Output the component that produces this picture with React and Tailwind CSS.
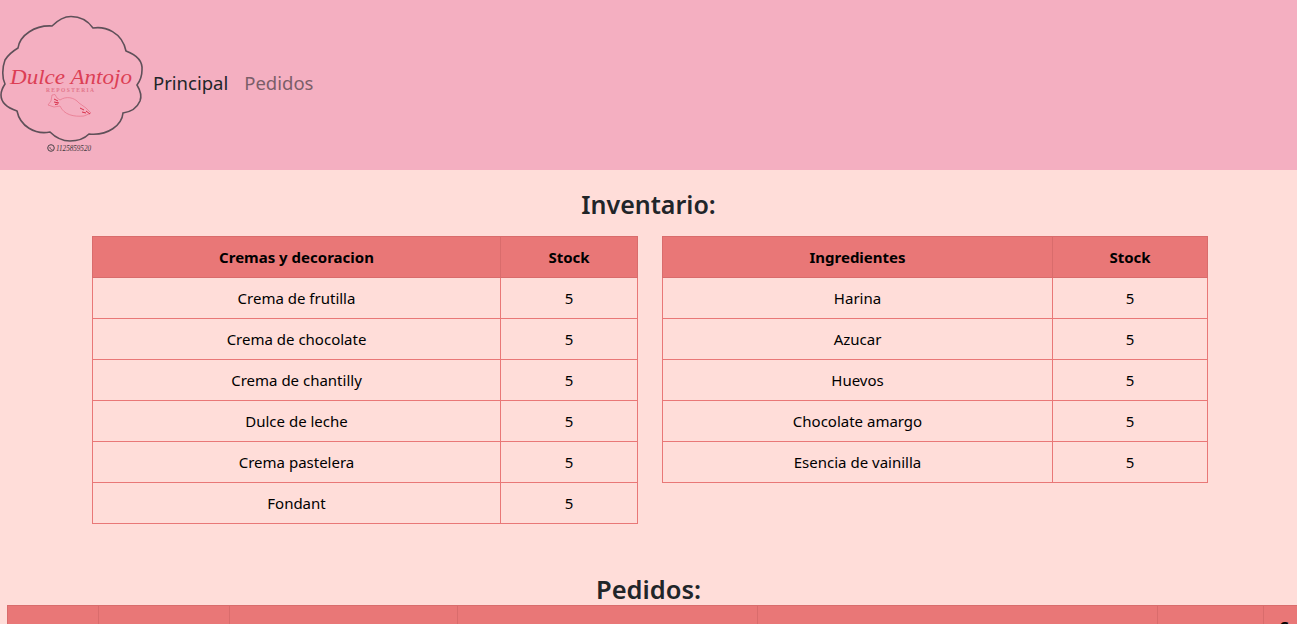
const FONT = "font-['Noto_Sans',sans-serif]";

function Logo() {
  return (
    <svg width="145" height="170" viewBox="0 0 145 170" className="shrink-0">
      <path
        d="M52 26 C58 20 64 16.5 71 16.5 C80 16.5 88 21 93 28 C105 26 122 32 126 51 C134 54 143 60 142 70 C142 76 140 81 137 85 C140 90 142 96 140 101 C137 108 130 112 123 113 C122 125 108 136 89 134 C84 139 77 141 70 141 C62 141 55 137 50 132 C35 135 20 126 17 111 C8 108 1 103 1 95 C1 91 3 87 5 84 C2 78 2 68 5 60 C8 55 13 51 18 48 C20 35 35 25 52 26 Z"
        fill="none"
        stroke="#5f5059"
        strokeWidth="1.6"
      />
      <text x="10" y="84" fontFamily="'Liberation Serif', serif" fontStyle="italic" fontSize="21" fill="#dc3f55" textLength="122" lengthAdjust="spacingAndGlyphs">
        Dulce Antojo
      </text>
      <text x="46" y="91.5" fontFamily="'Liberation Serif', serif" fontWeight="700" fontSize="5.5" fill="#e2758a" textLength="48" lengthAdjust="spacing">
        REPOSTERIA
      </text>
      <path
        d="M52 95 L55 94.5 L57 98 L60 100 C66 96 74 97 79 103 L86 108 L91 113 L84 116 C74 117 64 115 60 106 L54 107 L48 105 L51 101 Z"
        fill="none"
        stroke="#e9798f"
        strokeWidth="0.8"
      />
      <path d="M54 99 L58 101 M54 102 L59 103 M55 104.5 L58 104 M80 108 L84 110 M82 112 L86 113 M86 111 L90 114" stroke="#d8304a" strokeWidth="1" fill="none" />
      <circle cx="51" cy="148" r="3.3" fill="none" stroke="#4a4248" strokeWidth="1" />
      <path d="M49.8 147 C50 149 51 149.6 52.4 149.6" fill="none" stroke="#4a4248" strokeWidth="0.8" />
      <text x="56" y="150.5" fontFamily="'Liberation Serif', serif" fontStyle="italic" fontSize="7.5" fill="#3f383d" textLength="35" lengthAdjust="spacingAndGlyphs">
        1125859520
      </text>
    </svg>
  );
}

function StockTable({ title, firstWidth, rows }) {
  return (
    <table className="w-[546px] table-fixed border-collapse text-center text-[15px] text-black">
      <colgroup>
        <col className={firstWidth} />
        <col />
      </colgroup>
      <thead>
        <tr className="h-[41px] bg-[#e97777]">
          <th className="border border-[#d96c6c] p-0 font-bold">{title}</th>
          <th className="border border-[#d96c6c] p-0 font-bold">Stock</th>
        </tr>
      </thead>
      <tbody>
        {rows.map((r) => (
          <tr key={r} className="h-[41px]">
            <td className="border border-[#e97777] p-0">{r}</td>
            <td className="border border-[#e97777] p-0">5</td>
          </tr>
        ))}
      </tbody>
    </table>
  );
}

export default function App() {
  const cremas = ["Crema de frutilla", "Crema de chocolate", "Crema de chantilly", "Dulce de leche", "Crema pastelera", "Fondant"];
  const ingredientes = ["Harina", "Azucar", "Huevos", "Chocolate amargo", "Esencia de vainilla"];
  return (
    <div className={`h-[624px] overflow-hidden bg-[#ffddd9] ${FONT}`}>
      <nav className="flex h-[170px] items-center bg-[#f4afc1]">
        <Logo />
        <a className="mb-1 ml-2 text-[18.5px] text-[#212529]">Principal</a>
        <a className="mb-1 ml-4 text-[18.5px] text-[#7b5e68]">Pedidos</a>
      </nav>
      <h3 className="mt-[17px] mb-[15px] text-center text-[25px] leading-[34px] font-semibold text-[#212529]">Inventario:</h3>
      <div className="flex items-start justify-center gap-6 pl-[3px]">
        <StockTable title="Cremas y decoracion" firstWidth="w-[408px]" rows={cremas} />
        <div className="w-[546px]">
          <StockTable title="Ingredientes" firstWidth="w-[390px]" rows={ingredientes} />
        </div>
      </div>
      <h3 className="mt-[49px] text-center text-[25.5px] leading-[32px] font-semibold text-[#212529]">Pedidos:</h3>
      <table className="ml-[7px] w-[1340px] table-fixed border-collapse text-center text-[15px] text-black">
        <colgroup>
          <col className="w-[91px]" />
          <col className="w-[131px]" />
          <col className="w-[228px]" />
          <col className="w-[300px]" />
          <col className="w-[400px]" />
          <col className="w-[106px]" />
          <col />
        </colgroup>
        <thead>
          <tr className="h-[80px] bg-[#e97777] align-top">
            <th className="border border-[#d96c6c]" />
            <th className="border border-[#d96c6c]" />
            <th className="border border-[#d96c6c]" />
            <th className="border border-[#d96c6c]" />
            <th className="border border-[#d96c6c]" />
            <th className="border border-[#d96c6c]" />
            <th className="border border-[#d96c6c] pt-[9px] pl-[15px] text-left font-bold">Cantidad</th>
          </tr>
        </thead>
      </table>
    </div>
  );
}
